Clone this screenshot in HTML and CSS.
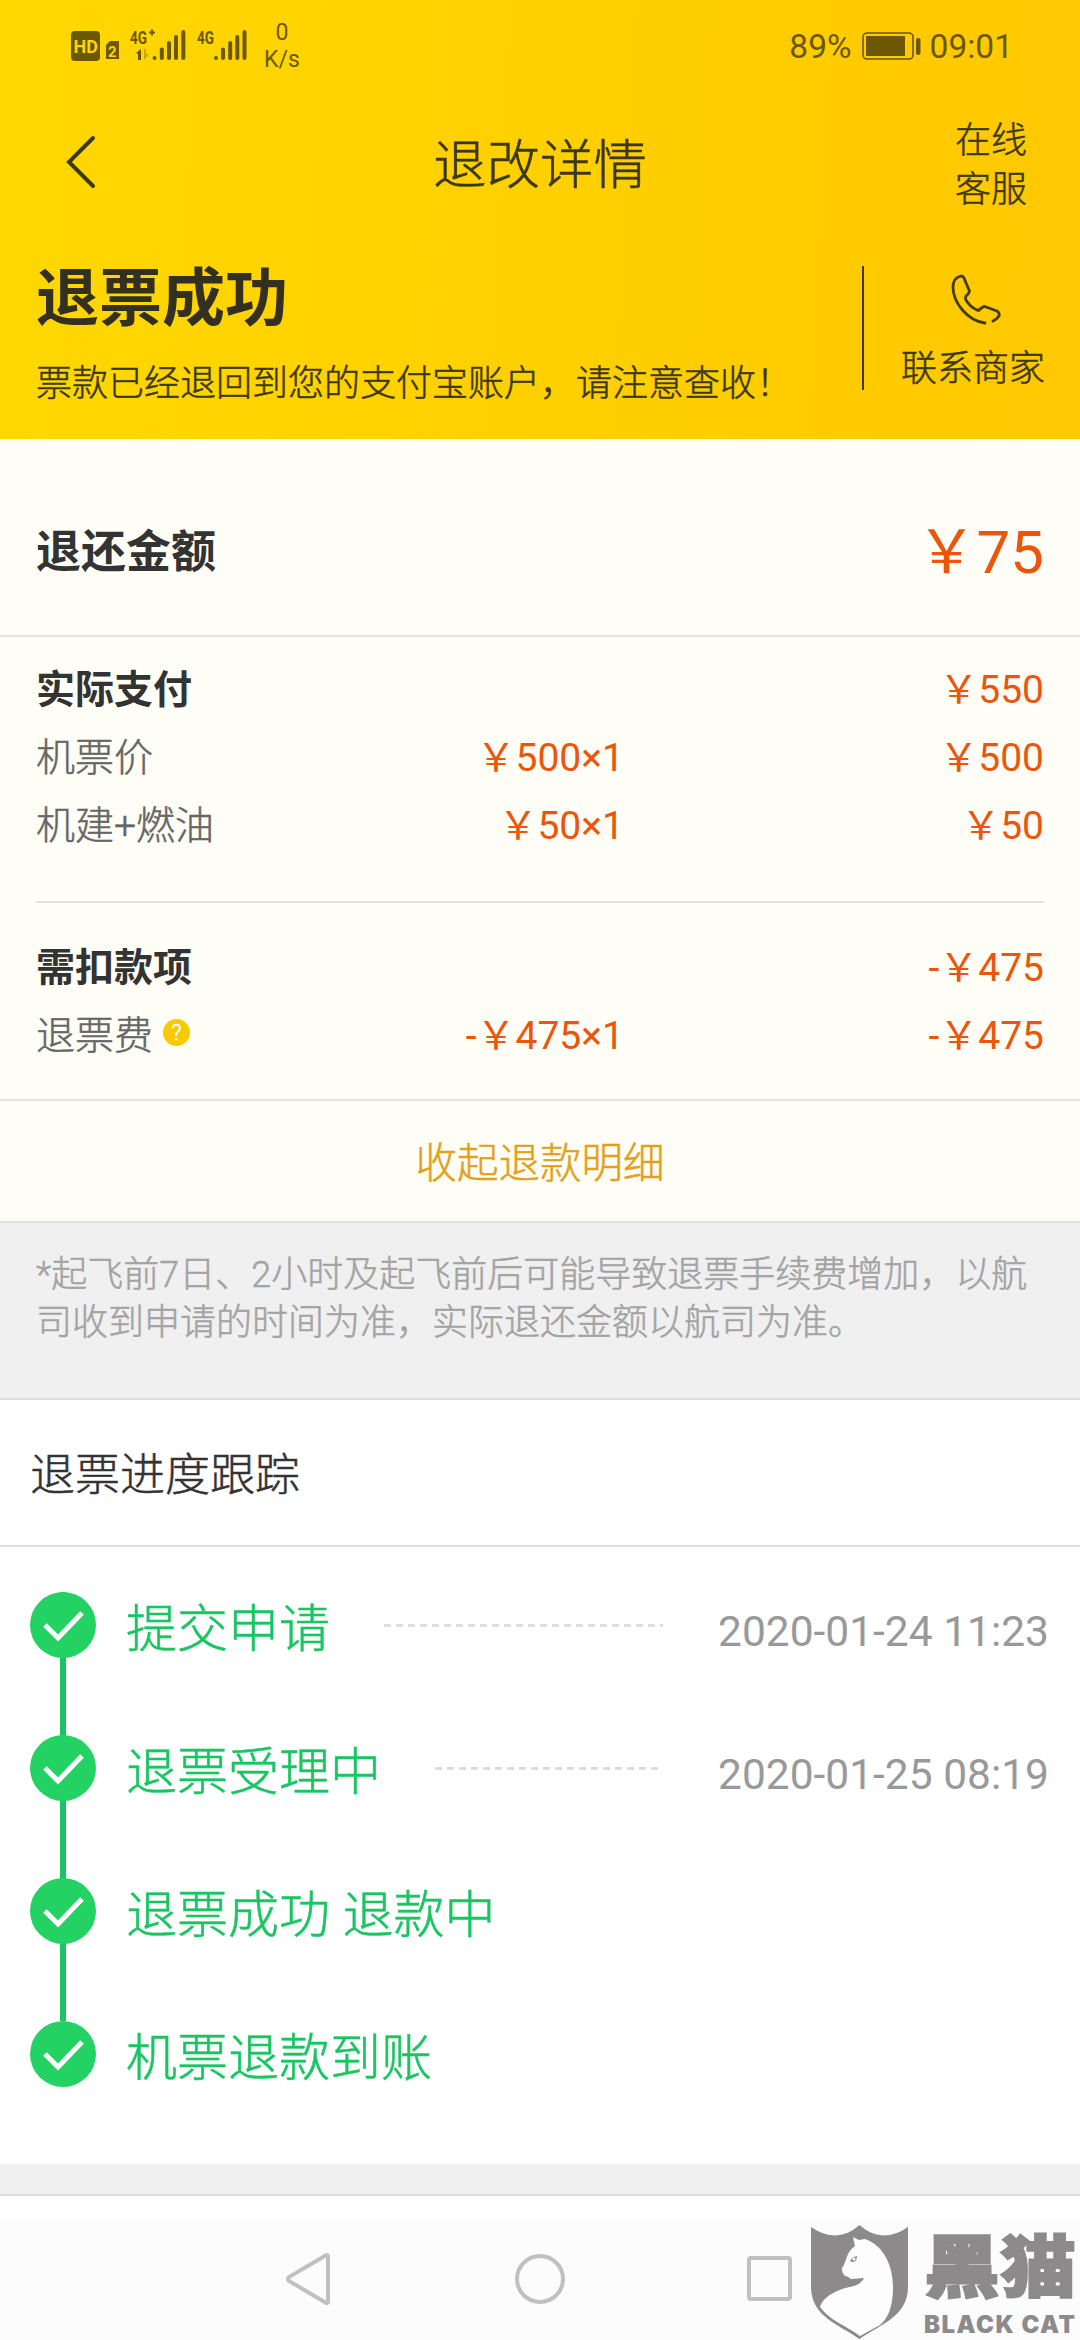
FILE: index.html
```html
<!DOCTYPE html>
<html lang="zh-CN">
<head>
<meta charset="utf-8">
<title>退改详情</title>
<link rel="stylesheet" href="styles.css">
</head>
<body>
<div class="screen">
  <header class="hero">
    <div class="status">
      <svg class="status-icons" width="180" height="40" viewBox="0 0 180 40" fill="#6b5800">
        <rect x="1" y="6" width="29" height="30" rx="4"/>
        <text class="hd" x="3.5" y="28">HD</text>
        <path d="M40 16h9v18H36V20z"/>
        <text class="sim" x="38" y="31.5">2</text>
        <text class="net" x="60" y="18.500" textLength="17" lengthAdjust="spacingAndGlyphs">4G</text>
        <path d="M79 7.500h6M82 4.500v6" stroke="#6b5800" stroke-width="2"/>
        <path d="M66 28l5-4v11h-3v-6z"/>
        <path d="M74 24h2v5h3l-5 6z" opacity=".35"/>
        <path d="M84.500 33v0M91.800 24.500v8.500M99 18v15M106 12v21M113.300 7v26" stroke="#6b5800" stroke-width="4" stroke-linecap="round"/>
        <text class="net" x="127" y="18.500" textLength="17" lengthAdjust="spacingAndGlyphs">4G</text>
        <path d="M146 33v0M153 24.500v8.500M160.200 18v15M167.300 12v21M174.500 7v26" stroke="#6b5800" stroke-width="4" stroke-linecap="round"/>
      </svg>
      <div class="speed"><span>0</span><span>K/s</span></div>
      <div class="status-right">
        <span class="percent">89%</span>
        <svg width="60" height="30" viewBox="0 0 60 30">
          <rect x="1" y="2" width="50" height="26" rx="4" fill="none" stroke="#6b5800" stroke-width="1.600"/>
          <rect x="4" y="5" width="39" height="20" fill="#6b5800"/>
          <rect x="54" y="7" width="4.500" height="17" rx="2" fill="#6b5800"/>
        </svg>
        <span class="clock">09:01</span>
      </div>
    </div>
    <nav class="navbar">
      <svg class="back" width="32" height="56" viewBox="0 0 32 56"><path d="M28 4L4 28l24 24" fill="none" stroke="#3c3a1a" stroke-width="4" stroke-linecap="round"/></svg>
      <h1 class="title">退改详情</h1>
      <div class="service">在线<br>客服</div>
    </nav>
    <div class="result">
      <div class="result-text">
        <h2 class="result-title">退票成功</h2>
        <p class="result-sub">票款已经退回到您的支付宝账户，请注意查收！</p>
      </div>
      <div class="contact">
        <svg width="50" height="52" viewBox="0 0 50 52" fill="none" stroke="#443c10" stroke-width="2.800" stroke-linecap="round" stroke-linejoin="round"><path d="M34 49C17 47 2 29 2 13C2 6 6 3 10 2Q12 2 13 4L18 16Q19 18 17 20L15 22Q14 24 15 26Q19 33 26 36Q28 37 29 35L32 33Q33 32 35 33L46 37Q49 39 48 42Q46 45 42 47"/></svg>
        <span>联系商家</span>
      </div>
    </div>
  </header>

  <section class="amount">
    <span class="amount-label">退还金额</span>
    <span class="amount-value">￥75</span>
  </section>
  <section class="detail">
    <div class="group paid">
      <div class="row"><b>实际支付</b><span class="price"></span><span class="price">￥550</span></div>
      <div class="row"><span>机票价</span><span class="price">￥500×1</span><span class="price">￥500</span></div>
      <div class="row"><span>机建+燃油</span><span class="price">￥50×1</span><span class="price">￥50</span></div>
    </div>
    <div class="group fee">
      <div class="row"><b>需扣款项</b><span class="price"></span><span class="price">-￥475</span></div>
      <div class="row"><span class="with-help">退票费<i class="help">?</i></span><span class="price">-￥475×1</span><span class="price">-￥475</span></div>
    </div>
  </section>
  <div class="collapse">收起退款明细</div>
  <p class="notice">*起飞前7日、2小时及起飞前后可能导致退票手续费增加，以航司收到申请的时间为准，实际退还金额以航司为准。</p>

  <h3 class="track-title">退票进度跟踪</h3>
  <ol class="steps">
    <li class="step"><svg class="check" viewBox="0 0 66 66"><circle cx="33" cy="33" r="33"/><path d="M15 33l13 13 24-25"/></svg><span>提交申请</span><i class="dots"></i><time>2020-01-24 11:23</time></li>
    <li class="step"><svg class="check" viewBox="0 0 66 66"><circle cx="33" cy="33" r="33"/><path d="M15 33l13 13 24-25"/></svg><span>退票受理中</span><i class="dots"></i><time>2020-01-25 08:19</time></li>
    <li class="step"><svg class="check" viewBox="0 0 66 66"><circle cx="33" cy="33" r="33"/><path d="M15 33l13 13 24-25"/></svg><span>退票成功 退款中</span></li>
    <li class="step"><svg class="check" viewBox="0 0 66 66"><circle cx="33" cy="33" r="33"/><path d="M15 33l13 13 24-25"/></svg><span>机票退款到账</span></li>
  </ol>
  <div class="band"></div>
  <div class="blank"></div>
  <footer class="sysnav">
    <svg width="54" height="54" viewBox="0 0 54 54"><path d="M45 4.500v45Q45 52 42.500 50.500L6 29Q4 27 6 25L42.500 3.500Q45 2 45 4.500z"/></svg>
    <svg width="54" height="54" viewBox="0 0 54 54"><circle cx="27" cy="27" r="23"/></svg>
    <svg width="54" height="54" viewBox="0 0 54 54"><rect x="6" y="6" width="41" height="41" rx="2"/></svg>
  </footer>

  <div class="watermark">
    <svg width="97" height="114" viewBox="0 0 97 114">
      <path fill="#8c8a8b" d="M0 2Q26 20 48.500 0Q71 20 97 2V62C97 92 68 100 48.500 114C29 100 0 92 0 62z"/>
      <path fill="#fdfdfd" d="M42 12L48 15L54 14C72 20 82 40 82 62C82 84 76 94 69 100L49 111C36 101 19 96 9 82C13 70 28 64 43 61Q51 58 53 53L40 54Q37 51 34 51Q30 47 31 43C36 37 34 28 44 21z"/>
      <path fill="#8c8a8b" d="M39 36Q41 32 46 31Q46 37 41 37z"/><circle cx="43" cy="34" r="1.500" fill="#fff"/>
    </svg>
    <div class="brand"><strong>黑猫</strong><em>BLACK CAT</em></div>
  </div>
</div>
</body>
</html>
```

FILE: styles.css
```css
* { box-sizing: border-box; margin: 0; padding: 0; }
body {
  width: 1080px;
  font-family: Roboto, "Noto Sans CJK SC", sans-serif;
  font-weight: 300;
  color: #333;
  background: #fff;
}
i, em { font-style: normal; }
svg { display: block; flex: none; }
.screen { position: relative; display: flex; flex-direction: column; width: 1080px; height: 2340px; overflow: hidden; }

/* light text carries a hairline stroke for a demi-light weight */
.title, .service, .result-sub, .contact span, .row > span:first-child, .collapse, .notice, .track-title, .step span { -webkit-text-stroke: .5px currentColor; }

/* header */
.hero { height: 439px; flex: none; background: linear-gradient(93deg, #ffd800 0%, #ffcf00 55%, #ffc800 100%); color: #3c3810; }
.status { display: flex; align-items: center; height: 92px; padding: 0 67px 0 70px; color: #6b5800; font-weight: 400; }
.status-icons { margin-top: -2px; }
.hd { font: 700 18px Roboto, sans-serif; fill: #ffd400; }
.sim { font: 700 15px Roboto, sans-serif; fill: #ffd400; }
.net { font: 700 18px Roboto, sans-serif; }
.speed { display: flex; flex-direction: column; align-items: center; width: 64px; font-size: 23px; line-height: 27px; }
.status-right { display: flex; align-items: center; margin-left: auto; font-size: 33.500px; }
.status-right svg { margin: 0 8px 0 10px; }
.navbar { display: grid; grid-template-columns: 170px 1fr 182px; align-items: center; height: 144px; padding: 0 53px 0 65px; }
.back { margin-top: -4px; }
.title { padding-top: 4px; font-size: 53.500px; font-weight: 300; text-align: center; line-height: 64px; }
.service { justify-self: end; padding-top: 4px; font-size: 36px; line-height: 49px; }
.result { display: flex; padding-top: 30px; }
.result-text { width: 862px; padding: 1px 0 0 36px; }
.result-title { font-size: 63px; font-weight: 700; line-height: 64px; color: #333020; }
.result-sub { margin-top: 27px; font-size: 36px; line-height: 52px; white-space: nowrap; }
.contact { display: flex; flex-direction: column; align-items: center; width: 218px; height: 124px; border-left: 2px solid #443c10; padding: 8px 0 0 2px; font-size: 36px; line-height: 48px; gap: 19px; }
.contact svg { margin-left: 5px; }

/* refund amount */
.amount, .detail, .collapse { background: #fffef6; }
.amount { display: flex; justify-content: space-between; align-items: center; height: 198px; padding: 22px 36px 0; border-bottom: 2px solid #e2e1dc; }
.amount-label { font-size: 45px; font-weight: 700; }
.amount-value { margin-top: -3px; font-size: 60px; font-weight: 400; color: #eb560c; }

.detail { height: 464px; border-bottom: 2px solid #e2e1dc; padding: 15px 36px 0; font-size: 39px; }
.group { display: flex; flex-direction: column; }
.paid { height: 251px; border-bottom: 2px solid #e2e1dc; }
.fee { padding-top: 27px; }
.row { display: grid; grid-template-columns: 285px 303px 1fr; align-items: center; height: 68px; color: #666; }
.row b { font-weight: 700; color: #333; }
.price { text-align: right; font-weight: 400; color: #eb560c; }
.with-help { display: flex; align-items: center; gap: 10px; }
.help { width: 27px; height: 27px; border-radius: 50%; background: #f8ca00; color: #fff; font-size: 22px; line-height: 27px; text-align: center; }
.collapse { height: 122px; border-bottom: 2px solid #e2e1dc; text-align: center; font-size: 41.500px; line-height: 125px; color: #e3a01b; }
.notice { height: 177px; padding: 28px 36px 0; border-bottom: 2px solid #ddd; background: #f0f0f0; color: #a3a3a3; font-size: 36px; line-height: 48px; }

/* progress */
.track-title { height: 147px; padding-left: 30px; border-bottom: 2px solid #ddd; font-size: 45px; line-height: 151px; font-weight: 300; }
.steps { height: 617px; padding: 45px 31px 0 30px; list-style: none; }
.step { display: flex; align-items: flex-start; height: 143px; font-size: 51px; line-height: 66px; color: #19c562; background: linear-gradient(#19c562, #19c562) 30px 0 / 6px 100% no-repeat; }
.step:last-child { background: none; }
.check { width: 66px; height: 66px; margin-right: 30px; }
.check circle { fill: #24d264; }
.check path { fill: none; stroke: #fff; stroke-width: 5; }
.step span { padding-top: 5px; }
.dots { flex: 1; height: 3px; margin: 32px 55px 0 54px; background: repeating-linear-gradient(90deg, #ddd 0 7px, transparent 7px 12px); }
.step time { padding-top: 7px; font-size: 42.500px; font-weight: 400; color: #999; }
.band { height: 32px; background: #f0f0f0; border-bottom: 2px solid #ddd; }
.blank { height: 23px; }

/* system navigation */
.sysnav { display: flex; justify-content: center; gap: 176px; flex: 1; padding-top: 33px; background: #fcfcfc; }
.sysnav svg { fill: none; stroke: #c0c0c0; stroke-width: 4; }

.watermark { position: absolute; left: 811px; top: 2225px; display: flex; gap: 16px; color: #8c8a8b; }
.brand { display: flex; flex-direction: column; padding-top: 6px; }
.brand strong { font-size: 76px; font-weight: 900; line-height: 76px; transform: scaleY(.9); -webkit-text-stroke: 2px #8c8a8b; }
.brand em { padding-top: 5px; font: 900 24px/26px Inter, sans-serif; letter-spacing: 1.500px; white-space: nowrap; }
```
